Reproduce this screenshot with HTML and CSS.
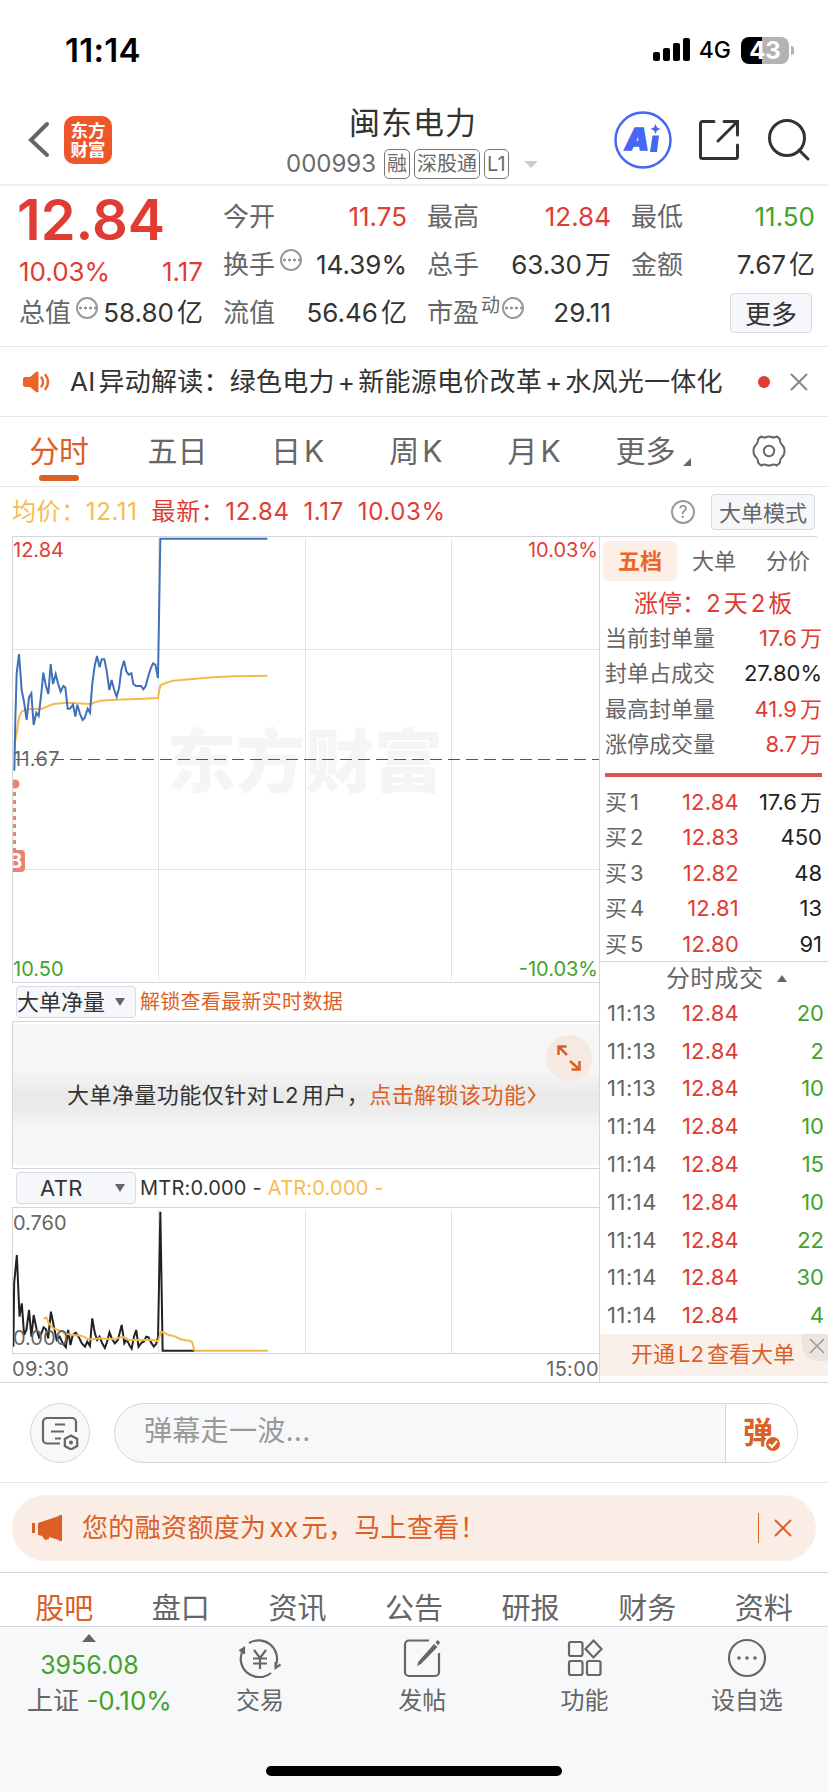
FILE: index.html
```html
<!DOCTYPE html>
<html lang="zh-CN">
<head>
  <meta charset="UTF-8">
  <meta name="viewport" content="width=device-width, initial-scale=1.0">
  <title>闽东电力 000993</title>
  <link rel="stylesheet" href="styles.css">
</head>
<body>
  <div class="status">
    <span class="clock">11:14</span>
    <svg class="signal" width="38" height="24" viewBox="0 0 38 24">
      <rect x="0" y="14" width="7" height="9" rx="2"/>
      <rect x="10" y="10" width="7" height="13" rx="2"/>
      <rect x="20" y="5" width="7" height="18" rx="2"/>
      <rect x="30" y="0" width="7" height="23" rx="2"/>
    </svg>
    <span class="net">4G</span>
    <span class="battery">43</span>
    <span class="battery-cap"></span>
  </div>

  <header class="nav">
    <svg class="back" width="24" height="38" viewBox="0 0 24 38"><path d="M20 3 4 19 20 34"/></svg>
    <div class="logo">东方<br>财富</div>
    <div class="title">
      <h1>闽东电力</h1>
      <div class="code">
        <span class="num">000993</span>
        <span class="tag">融</span>
        <span class="tag">深股通</span>
        <span class="tag">L1</span>
        <span class="caret"></span>
      </div>
    </div>
    <svg class="ai" width="60" height="60" viewBox="0 0 60 60">
      <circle cx="30" cy="30" r="27.5"/>
      <text x="12" y="40">A</text>
      <path d="M39.5 25.5h6.5l-2 16.500h-7zM42.500 14l1.500 3.500 3.500 1.500-3.500 1.500-1.500 3.500-1.500-3.500-3.500-1.500 3.500-1.500z"/>
    </svg>
    <svg class="line-icon" width="44" height="44" viewBox="0 0 44 44"><path d="M17 3.500H5.500a2 2 0 0 0-2 2v33a2 2 0 0 0 2 2h33a2 2 0 0 0 2-2V27M27 3.500h13.500V17M39.500 4.500 21 23"/></svg>
    <svg class="line-icon search" width="44" height="44" viewBox="0 0 44 44"><circle cx="20" cy="20" r="17.500"/><path d="M32 32l9 9"/></svg>
  </header>

  <section class="quote">
    <div class="col main">
      <div class="price">12.84</div>
      <div class="row red"><span>10.03%</span><span>1.17</span></div>
      <div class="row"><label>总值</label><i class="more"></i><b>58.80<u>亿</u></b></div>
    </div>
    <div class="col">
      <div class="row"><label>今开</label><b class="red">11.75</b></div>
      <div class="row"><label>换手</label><i class="more"></i><b>14.39%</b></div>
      <div class="row"><label>流值</label><b>56.46<u>亿</u></b></div>
    </div>
    <div class="col">
      <div class="row"><label>最高</label><b class="red">12.84</b></div>
      <div class="row"><label>总手</label><b>63.30<u>万</u></b></div>
      <div class="row"><label>市盈</label><sup>动</sup><i class="more tight"></i><b>29.11</b></div>
    </div>
    <div class="col">
      <div class="row"><label>最低</label><b class="green">11.50</b></div>
      <div class="row"><label>金额</label><b>7.67<u>亿</u></b></div>
      <div class="row"><button class="btn-more">更多</button></div>
    </div>
  </section>

  <section class="notice">
    <svg width="28" height="24" viewBox="0 0 28 24">
      <path class="fill" d="M3 7h5l6-5c1-.8 2.500-.5 2.500 1v18c0 1.500-1.500 1.800-2.500 1l-6-5H3c-1 0-2-1-2-2V9c0-1 1-2 2-2z"/>
      <path class="stroke" d="M19.500 7.500c2 2.500 2 6.500 0 9M23.500 5c3.300 4 3.300 10 0 14"/>
    </svg>
    <p>AI<u>异动解读：绿色电力</u><u>+</u><u>新能源电价改革</u><u>+</u><u>水风光一体化</u></p>
    <span class="dot"></span>
    <svg class="close" width="18" height="18" viewBox="0 0 18 18"><path d="M1 1l16 16M17 1 1 17"/></svg>
  </section>

  <nav class="periods">
    <span class="active">分时</span>
    <span>五日</span>
    <span>日<u>K</u></span>
    <span>周<u>K</u></span>
    <span>月<u>K</u></span>
    <span class="with-corner">更多<i></i></span>
    <span>
      <svg width="34" height="34" viewBox="0 0 34 34"><path d="M9.500 2.500c2 1.500 4 1 5 .5 1.500-.7 3.500-.7 5 0 1 .5 3 1 5-.5 1.500.8 2.800 1.800 3.500 3-.3 3 .8 4 2 5.200 1.700 1.500 2.500 4 2.500 6.300s-.8 4.800-2.500 6.300c-1.200 1.200-2.300 2.200-2 5.200-.7 1.200-2 2.200-3.500 3-2-1.500-4-1-5-.5-1.500.7-3.500.7-5 0-1-.5-3-1-5 .5-1.500-.8-2.800-1.800-3.500-3 .3-3-.8-4-2-5.200C2.300 21.800 1.500 19.300 1.500 17s.8-4.800 2.500-6.300c1.200-1.200 2.300-2.200 2-5.200.7-1.200 2-2.200 3.500-3z"/><circle cx="17" cy="17" r="5.200"/></svg>
    </span>
  </nav>

  <div class="summary">
    <span class="yellow">均价：12.11</span>
    <span class="red">最新：12.84</span>
    <span class="red">1.17</span>
    <span class="red">10.03%</span>
    <span class="help">?</span>
    <button>大单模式</button>
  </div>

  <main class="board">
    <div class="charts">
      <div class="chart price-chart">
        <svg width="586" height="445" viewBox="0 0 586 445">
          <text class="watermark" x="154" y="250">东方财富</text>
          <path class="grid" d="M145.500 2V443M292.500 2V443M438.500 2V443M0 112.500H586M0 332.500H586"/>
          <path class="base" d="M3 222.500H586"/>
          <g transform="translate(-13 -127) scale(.33333)">
            <polyline class="avg" points="43,1005 50,970 57,922 64,906 75,900 95,896 125,897 140,890 160,882 200,878 272,882 300,872 350,869 430,866 474,864 478,840 482,825 500,818 520,812 570,808 640,802 700,799 802,797"/>
            <polyline class="last" points="43,1082 46,930 50,790 57,732 65,840 72,875 80,930 87,862 94,850 101,945 109,908 116,918 124,850 130,788 137,825 145,852 152,762 159,822 167,792 174,820 182,845 190,828 196,832 203,896 210,896 219,884 226,920 232,884 240,912 248,930 254,924 263,896 270,908 277,820 284,768 291,738 299,772 305,748 313,748 320,782 328,840 335,810 342,838 350,860 357,835 364,780 372,752 379,784 386,794 394,790 400,822 408,828 423,828 430,838 437,828 445,798 452,776 459,760 466,764 474,804 481,386 802,386"/>
          </g>
          <path class="mark" d="M1.500 247V327"/>
          <circle class="spot" cx="2" cy="247" r="4.500"/>
          <rect class="spot" x="-8" y="313" width="20" height="22" rx="4"/>
          <text class="badge" x="-4" y="331">B</text>
        </svg>
        <span class="tl red">12.84</span>
        <span class="tr red">10.03%</span>
        <span class="ml">11.67</span>
        <span class="bl green">10.50</span>
        <span class="br green">-10.03%</span>
      </div>

      <div class="indicator">
        <div class="select">大单净量<i></i></div>
        <span class="orange hint">解锁查看最新实时数据</span>
      </div>

      <div class="locked">
        <p>大单净量功能仅针对<u>L2</u><u>用户，</u><a>点击解锁该功能</a></p>
        <svg class="chev" width="9" height="18" viewBox="0 0 9 18"><path d="M1.500 1 7.500 9l-6 8"/></svg>
        <div class="expand">
          <svg width="24" height="26" viewBox="0 0 24 26"><path d="M9.500 1.500H1.500V10M2 2l8 8M22.500 16v8.500H14.500M22 24l-9-8"/></svg>
        </div>
      </div>

      <div class="indicator">
        <div class="select atr">ATR<i></i></div>
        <span class="legend">MTR:0.000 -</span>
        <span class="legend yellow">ATR:0.000 -</span>
      </div>

      <div class="chart atr-chart">
        <svg width="586" height="145" viewBox="0 0 586 145">
          <path class="grid" d="M145.500 2V145M292.500 2V145M438.500 2V145"/>
          <g transform="translate(-13 -208) scale(.3827 .33333)">
            <polyline class="mtr" points="35,1040 37,850 44,765 51,950 57,910 63,1005 69,990 76,930 82,1010 88,945 96,990 102,1012 108,1000 114,982 120,988 126,1015 133,935 140,975 148,1020 156,1010 164,1030 172,1042 178,990 184,1035 190,1005 198,998 206,1012 214,1030 222,1040 228,1025 235,1038 241,955 248,1000 254,1020 260,1010 267,1030 274,1044 280,1025 286,997 293,1018 300,1030 308,1020 318,975 325,1030 331,1018 338,1035 344,1046 350,1010 356,990 362,1040 370,1028 376,1025 382,1010 388,1012 395,1028 402,1040 408,1032 413,1010 419,635 425,1052 510,1052"/>
            <polyline class="avg" points="114,957 121,952 128,970 140,985 155,992 170,1001 185,1004 200,1006 215,1008 230,1018 245,1018 260,1015 275,1016 300,1018 320,1010 335,1020 350,1019 365,1020 385,1020 400,1020 413,1024 420,996 430,998 440,1005 450,1007 460,1011 470,1017 480,1020 495,1022 502,1026 508,1052 700,1052"/>
          </g>
        </svg>
        <span class="tl">0.760</span>
        <span class="bl">0.000</span>
      </div>
      <div class="times"><span>09:30</span><span>15:00</span></div>
    </div>

    <aside class="depth">
      <div class="depth-tabs"><span class="active">五档</span><span>大单</span><span>分价</span></div>
      <div class="limit">涨停：2<u>天</u><u>2</u><u>板</u></div>
      <div class="stats">
        <div><span>当前封单量</span><b class="red">17.6<u>万</u></b></div>
        <div><span>封单占成交</span><b>27.80%</b></div>
        <div><span>最高封单量</span><b class="red">41.9<u>万</u></b></div>
        <div><span>涨停成交量</span><b class="red">8.7<u>万</u></b></div>
      </div>
      <div class="bar"></div>
      <div class="bids">
        <div><span>买<u>1</u></span><em>12.84</em><b>17.6<u>万</u></b></div>
        <div><span>买<u>2</u></span><em>12.83</em><b>450</b></div>
        <div><span>买<u>3</u></span><em>12.82</em><b>48</b></div>
        <div><span>买<u>4</u></span><em>12.81</em><b>13</b></div>
        <div><span>买<u>5</u></span><em>12.80</em><b>91</b></div>
      </div>
      <div class="trades-title">分时成交<i></i></div>
      <div class="trades">
        <div><span>11:13</span><em>12.84</em><b>20</b></div>
        <div><span>11:13</span><em>12.84</em><b>2</b></div>
        <div><span>11:13</span><em>12.84</em><b>10</b></div>
        <div><span>11:14</span><em>12.84</em><b>10</b></div>
        <div><span>11:14</span><em>12.84</em><b>15</b></div>
        <div><span>11:14</span><em>12.84</em><b>10</b></div>
        <div><span>11:14</span><em>12.84</em><b>22</b></div>
        <div><span>11:14</span><em>12.84</em><b>30</b></div>
        <div><span>11:14</span><em>12.84</em><b>4</b></div>
      </div>
      <div class="promo">开通<u>L2</u><u>查看大单</u>
        <span class="promo-close"><svg width="16" height="16" viewBox="0 0 16 16"><path d="M1 1l14 14M15 1 1 15"/></svg></span>
      </div>
    </aside>
  </main>

  <section class="barrage">
    <div class="round">
      <svg width="38" height="34" viewBox="0 0 38 34">
        <path d="M19 27.500H6a4 4 0 0 1-4-4V6a4 4 0 0 1 4-4h25a4 4 0 0 1 4 4v10M14 8.500h10M10 15.500h13M14 22.500h6"/>
        <path d="M30 19.500l6.200 3.500v7L30 33.500 23.800 30v-7z"/><circle class="fill" cx="30" cy="26.500" r="2"/>
      </svg>
    </div>
    <div class="input">
      <span>弹幕走一波...</span>
      <div class="send">弹
        <svg width="18" height="18" viewBox="0 0 18 18"><circle cx="9" cy="9" r="8"/><path d="M5 9l3 3 5-6"/></svg>
      </div>
    </div>
  </section>

  <section class="banner-wrap">
    <div class="banner">
      <svg width="31" height="28" viewBox="0 0 31 28"><path d="M0 9h3v10H0zM6 9l21-7V1h3v26h-3v-1l-10-3v2l-4 1-3-4-4-1z"/></svg>
      <p>您的融资额度为<u>xx</u><u>元，马上查看！</u></p>
      <span class="sep"></span>
      <svg class="close" width="18" height="18" viewBox="0 0 18 18"><path d="M1 1l16 16M17 1 1 17"/></svg>
    </div>
  </section>

  <nav class="sections">
    <span class="active">股吧</span><span>盘口</span><span>资讯</span><span>公告</span><span>研报</span><span>财务</span><span>资料</span>
  </nav>

  <footer class="toolbar">
    <div class="index">
      <i></i>
      <div class="green">3956.08</div>
      <div>上证 <span class="green">-0.10%</span></div>
    </div>
    <div class="tool">
      <svg width="44" height="40" viewBox="0 0 44 40"><path d="M11 5a18.500 18.500 0 0 1 27 22M33 35A18.500 18.500 0 0 1 5.500 11M1.500 13l4.500-3v6M42.500 26.500l-5 3.500v-6M16 12l6 8 6-8M22 20v11M15 20.500h14M15 25.500h14"/></svg>
      <span>交易</span>
    </div>
    <div class="tool">
      <svg width="40" height="40" viewBox="0 0 40 40"><path d="M27 2.500H7a4 4 0 0 0-4 4V34a4 4 0 0 0 4 4h26a4 4 0 0 0 4-4V15"/><path class="fill" d="M32 6l3.500 3-16.500 17-4 2 1.500-4.500zM33.500 4.500l2-2.500 2.500 2-1.500 3.500z"/></svg>
      <span>发帖</span>
    </div>
    <div class="tool">
      <svg width="38" height="40" viewBox="0 0 38 40"><rect x="3" y="4" width="13.500" height="14" rx="2"/><rect x="3" y="23" width="13.500" height="14" rx="2"/><rect x="21" y="23" width="13.500" height="14" rx="2"/><path d="M27.500 2.500l8 8.500-8 8.500-8-8.500z"/></svg>
      <span>功能</span>
    </div>
    <div class="tool">
      <svg width="40" height="40" viewBox="0 0 40 40"><circle cx="20" cy="20" r="18"/><circle class="fill" cx="12" cy="20" r="1.800"/><circle class="fill" cx="20" cy="20" r="1.800"/><circle class="fill" cx="28" cy="20" r="1.800"/></svg>
      <span>设自选</span>
    </div>
    <div class="home"></div>
  </footer>
</body>
</html>
```
FILE: styles.css
```css
* {
  box-sizing: border-box;
}
body {
  margin: 0;
  width: 828px;
  height: 1792px;
  overflow: hidden;
  background: #fff;
  color: #333;
  font-family: Inter, "Noto Sans CJK SC", sans-serif;
  font-weight: 400;
  line-height: 1;
}
h1, p {
  margin: 0;
  font-weight: 400;
}
b, em, i {
  font-weight: 400;
  font-style: normal;
}
/* gap between latin and chinese runs */
u {
  text-decoration: none;
  margin-left: 3px;
}
svg {
  display: block;
  flex: none;
  fill: none;
}
button {
  font-family: inherit;
  padding: 0 0 4px;
  color: #333;
  background: #f6f7fa;
  border: 1px solid #d9dae3;
  border-radius: 4px;
}
.red { color: #e03c34; }
.green { color: #44a22c; }
.yellow { color: #f5bc50; }
.orange { color: #dc6026; }

/* status bar */
.status {
  height: 100px;
  display: flex;
  align-items: center;
  padding: 0 34px 0 65px;
}
.clock {
  flex: 1;
  font-size: 33px;
  font-weight: 600;
  letter-spacing: .3px;
  color: #000;
}
.signal {
  fill: #000;
}
.net {
  margin-left: 8px;
  font-size: 23px;
  font-weight: 500;
  color: #000;
}
.battery {
  width: 48px;
  height: 27px;
  margin-left: 10px;
  border-radius: 8px;
  background: linear-gradient(90deg, #000 44%, #b3b3b3 44%);
  color: #fff;
  font-size: 24px;
  font-weight: 700;
  line-height: 27px;
  text-align: center;
}
.battery-cap {
  width: 3px;
  height: 9px;
  margin-left: 2px;
  border-radius: 0 4px 4px 0;
  background: #b3b3b3;
}

/* top navigation */
.nav {
  height: 86px;
  border-bottom: 2px solid #eee;
  display: flex;
  align-items: center;
  padding: 0 17px 4px 27px;
}
.back {
  stroke: #666;
  stroke-width: 4;
  stroke-linecap: round;
}
.logo {
  width: 48px;
  height: 48px;
  margin-left: 13px;
  padding-top: 5px;
  border-radius: 10px;
  background: #ee572a;
  color: #fff;
  font-size: 17.500px;
  font-weight: 700;
  line-height: 19px;
  text-align: center;
}
.title {
  width: 260px;
  margin-left: 174px;
}
.title h1 {
  font-size: 31px;
  letter-spacing: 1px;
  line-height: 44px;
  height: 48px;
  padding-left: 63px;
}
.code {
  display: flex;
  align-items: center;
  gap: 4px;
  height: 30px;
  color: #6b6b6b;
}
.code .num {
  font-size: 24px;
  margin-right: 4px;
}
.tag {
  height: 30px;
  padding: 0 2px;
  border: 1px solid #777;
  border-radius: 5px;
  font-size: 20px;
  line-height: 28px;
  white-space: nowrap;
}
.caret {
  margin-left: 11px;
  border: 7px solid transparent;
  border-top-color: #ccc;
  border-bottom: 0;
}
.ai {
  margin-left: 67px;
  fill: #4567f5;
}
.ai circle {
  fill: none;
  stroke: #4567f5;
  stroke-width: 2.500;
}
.ai text {
  font-size: 30px;
  font-weight: 900;
  font-style: italic;
  stroke: #4567f5;
  stroke-width: 1.500;
}
.line-icon {
  margin-left: 24px;
  stroke: #333;
  stroke-width: 3;
  stroke-linecap: round;
}
.search {
  margin-left: 26px;
}

/* quote numbers */
.quote {
  height: 161px;
  border-bottom: 1px solid #e9e9e9;
  display: flex;
  gap: 20px;
  padding: 7px 13px 0 19px;
  font-size: 26px;
}
.col {
  width: 184px;
}
.row {
  height: 48px;
  display: flex;
  align-items: center;
}
.row b, .row.red span:last-child {
  margin-left: auto;
  white-space: nowrap;
}
.main .price {
  height: 58px;
  margin-left: -2px;
  font-size: 56px;
  font-weight: 600;
  line-height: 55px;
  color: #e03c34;
}
.main .row {
  height: 41px;
}
label {
  color: #666;
}
.more {
  flex: none;
  width: 22px;
  height: 22px;
  margin: -10px 0 0 5px;
  border: 2px solid #999;
  border-radius: 50%;
  background: radial-gradient(circle, #999 1.300px, transparent 1.800px) 0 0 / 5px 18px;
}
.more.tight {
  margin-left: 2px;
}
sup {
  font-size: 19px;
  margin: -16px 0 0 2px;
  color: #666;
}
.btn-more {
  width: 82px;
  height: 40px;
  margin-left: auto;
  margin-right: 3px;
  font-size: 26px;
}

/* ai notice */
.notice {
  height: 70px;
  border-bottom: 1px solid #e9e9e9;
  display: flex;
  align-items: center;
  padding: 0 20px 0 22px;
  font-size: 26px;
  letter-spacing: .25px;
}
.notice p {
  width: 665px;
  margin-left: 20px;
  white-space: nowrap;
}
.notice .fill { fill: #ec6528; }
.notice .stroke { stroke: #ec6528; stroke-width: 2.500; stroke-linecap: round; }
.dot {
  width: 12px;
  height: 12px;
  margin-left: 23px;
  border-radius: 50%;
  background: #e03c34;
}
.close {
  margin-left: auto;
  stroke: #888;
  stroke-width: 2;
}

/* period tabs */
.periods {
  height: 70px;
  border-bottom: 1px solid #e9e9e9;
  display: flex;
  font-size: 30px;
  color: #666;
}
.periods span {
  width: 118.280px;
  padding-bottom: 2px;
  display: flex;
  align-items: center;
  justify-content: center;
  position: relative;
}
.periods u {
  margin-right: -4px;
}
.periods .active {
  color: #dc6026;
}
.periods .active::after {
  content: "";
  position: absolute;
  bottom: 5px;
  width: 40px;
  height: 6px;
  border-radius: 3px;
  background: #dc6026;
}
.periods .with-corner {
  padding-left: 6px;
}
.with-corner i {
  align-self: flex-end;
  margin: 0 0 18px 8px;
  border: 4px solid #666;
  border-top-color: transparent;
  border-left-color: transparent;
}
.periods svg {
  stroke: #666;
  stroke-width: 2;
}

/* average / latest */
.summary {
  height: 49px;
  display: flex;
  align-items: center;
  padding: 0 13px 0 12px;
  font-size: 24px;
  letter-spacing: .6px;
}
.summary span + span {
  margin-left: 14px;
}
.summary .help {
  width: 24px;
  height: 24px;
  margin-left: auto;
  border: 2px solid #999;
  border-radius: 50%;
  color: #888;
  font-size: 17px;
  letter-spacing: 0;
  line-height: 20px;
  text-align: center;
}
.summary button {
  width: 104px;
  height: 36px;
  margin-left: 16px;
  font-size: 22px;
  color: #666;
}

/* charts */
.board {
  height: 847px;
  border-bottom: 1px solid #d5d5dc;
  display: flex;
}
.charts {
  width: 587px;
  margin-left: 12px;
}
.chart {
  position: relative;
  border: 1px solid #d5d5dc;
  border-right: 0;
  font-size: 20px;
  color: #666;
}
.chart span {
  position: absolute;
}
.chart .tl { top: 3px; left: 0; }
.chart .tr { top: 3px; right: 1px; }
.chart .bl { bottom: 3px; left: 0; }
.chart .br { bottom: 3px; right: 1px; }
.chart .ml { top: 212px; left: 0; letter-spacing: .3px; }
.price-chart {
  height: 447px;
}
.grid { stroke: #e3e3e9; }
.base { stroke: #555; stroke-dasharray: 12 6; }
.avg, .last, .mtr {
  stroke-width: 2;
  vector-effect: non-scaling-stroke;
}
.avg { stroke: #f5b94a; }
.last { stroke: #4070b8; }
.mtr { stroke: #222; }
.watermark {
  fill: #f5f5f5;
  font-size: 69px;
  font-weight: 900;
}
.mark { stroke: #ee8070; stroke-width: 3; stroke-dasharray: 4 4; }
.spot { fill: #ee8070; }
.badge { fill: #fff; font-size: 20px; font-weight: 700; }

.indicator {
  height: 38px;
  display: flex;
  align-items: center;
  padding-left: 4px;
  font-size: 20px;
  white-space: nowrap;
}
.select {
  width: 120px;
  height: 32px;
  border: 1px solid #d9dae3;
  border-radius: 4px;
  background: #f6f7fa;
  font-size: 22px;
  display: flex;
  align-items: center;
}
.select i {
  margin-left: 10px;
  border: 5px solid transparent;
  border-top: 8px solid #666;
  border-bottom: 0;
}
.select.atr {
  padding-left: 23px;
  letter-spacing: .4px;
}
.select.atr i {
  margin-left: auto;
  margin-right: 10px;
}
.hint {
  margin-left: 4px;
  letter-spacing: .3px;
}
.legend {
  margin-left: 4px;
  letter-spacing: .2px;
}
.legend + .legend {
  margin-left: 6px;
}
.locked {
  position: relative;
  height: 148px;
  border: 1px solid #d5d5dc;
  border-right: 0;
  padding-left: 54px;
  display: flex;
  align-items: center;
  font-size: 22px;
  letter-spacing: .45px;
  background: linear-gradient(180deg, #fff 2px, #f7f7f7 2px, #f6f6f6 32%, #e9e9e9 50%, #ebebeb 58%, #f6f6f6 74%, #f7f7f7 143px, #fff 143px);
  white-space: nowrap;
}
.locked a {
  color: #dc6026;
}
.chev {
  stroke: #dc6026;
  stroke-width: 2;
  margin-left: 1px;
}
.expand {
  position: absolute;
  top: 13px;
  right: 7px;
  width: 46px;
  height: 46px;
  border-radius: 50%;
  background: #f5e9e2;
  display: flex;
  align-items: center;
  justify-content: center;
}
.expand svg {
  stroke: #dc6026;
  stroke-width: 2.500;
}
.atr-chart {
  height: 147px;
}
.atr-chart .tl {
  top: 5px;
}
.atr-chart .bl {
  bottom: 5px;
}
.times {
  height: 29px;
  display: flex;
  align-items: center;
  justify-content: space-between;
  font-size: 20px;
  letter-spacing: .3px;
  color: #666;
}

/* order depth */
.depth {
  flex: 1;
  border-left: 1px solid #d5d5dc;
  color: #666;
  font-size: 22px;
}
.depth b {
  color: #222;
}
.depth b.red {
  color: #e03c34;
}
.depth-tabs {
  width: 217px;
  height: 46px;
  border-top: 1px solid #d5d5dc;
  padding: 4px 0 0 3px;
  display: flex;
}
.depth-tabs span {
  width: 74px;
  height: 40px;
  line-height: 40px;
  border-radius: 6px;
  text-align: center;
  flex: none;
}
.depth-tabs .active {
  background: #fdeee6;
  color: #ec6528;
  font-weight: 700;
}
.limit {
  height: 38px;
  line-height: 43px;
  padding-left: 34px;
  color: #e03c34;
  font-size: 24px;
}
.stats {
  padding: 0 6px 0 5px;
}
.stats div, .bids div, .trades div {
  height: 35.500px;
  display: flex;
  align-items: center;
  justify-content: space-between;
}
.bar {
  height: 4px;
  margin: 11px 6px 0 5px;
  background: #db5650;
}
.bids {
  height: 185px;
  padding: 7px 6px 0 5px;
  border-bottom: 1px solid #d5d5dc;
}
.bids em, .trades em {
  flex: 1;
  padding-right: 83px;
  text-align: right;
  color: #e03c34;
  letter-spacing: .2px;
}
.bids span, .bids b, .trades span, .trades b {
  width: 50px;
  white-space: nowrap;
}
.bids b, .trades b {
  width: 0;
  display: flex;
  justify-content: flex-end;
}
.trades-title {
  height: 32px;
  display: flex;
  align-items: center;
  padding: 1px 0 0 66px;
  font-size: 24px;
  letter-spacing: .3px;
}
.trades-title i {
  margin-left: 14px;
  border: 5px solid transparent;
  border-bottom: 7px solid #666;
  border-top: 0;
}
.trades {
  padding: 0 4px 0 7px;
}
.trades div {
  height: 37.800px;
}
.trades span {
  letter-spacing: .5px;
}
.trades em {
  padding-right: 85px;
}
.depth .trades b {
  color: #44a22c;
}
.promo {
  position: relative;
  height: 42px;
  line-height: 40px;
  padding-left: 31px;
  background: #faf0ea;
  color: #dc6026;
}
.promo-close {
  position: absolute;
  top: 0;
  right: 0;
  width: 26px;
  height: 27px;
  padding: 4px 0 0 7px;
  border-bottom-left-radius: 16px;
  background: #ebe4df;
}
.promo-close svg {
  stroke: #999;
  stroke-width: 1.500;
}

/* barrage input */
.barrage {
  height: 100px;
  border-bottom: 1px solid #e9e9e9;
  display: flex;
  align-items: center;
  gap: 24px;
  padding: 0 30px;
}
.round {
  width: 60px;
  height: 60px;
  border: 1px solid #d5d5dc;
  border-radius: 50%;
  background: #f7f8fa;
  display: flex;
  align-items: center;
  justify-content: center;
}
.round svg {
  stroke: #666;
  stroke-width: 2.200;
}
.round .fill { fill: #666; stroke: none; }
.input {
  flex: 1;
  height: 60px;
  border: 1px solid #d5d5dc;
  border-radius: 30px;
  background: #f7f8fa;
  overflow: hidden;
  display: flex;
  align-items: center;
  padding-left: 29px;
  font-size: 28px;
  letter-spacing: .3px;
  color: #999;
}
.input > span {
  padding-bottom: 3px;
}
.send {
  position: relative;
  width: 72px;
  height: 60px;
  margin-left: auto;
  padding-left: 17px;
  border-left: 1px solid #d5d5dc;
  background: #fff;
  color: #dc6026;
  font-weight: 700;
  font-size: 30px;
  line-height: 58px;
}
.send svg {
  position: absolute;
  left: 38px;
  top: 32px;
  fill: #dc6026;
  stroke: #fff;
  stroke-width: 2;
}
.send path { fill: none; }

/* margin banner */
.banner-wrap {
  height: 90px;
  border-bottom: 1px solid #d5d5dc;
  padding: 12px 12px 0;
}
.banner {
  height: 66px;
  border-radius: 33px;
  background: #faede5;
  color: #dc6026;
  display: flex;
  align-items: center;
  padding: 0 24px 0 20px;
  font-size: 26px;
  letter-spacing: .35px;
}
.banner svg:first-child { fill: #dc6026; }
.banner p {
  flex: 1;
  margin-left: 19px;
}
.sep {
  width: 1px;
  height: 30px;
  background: #dc6026;
}
.banner .close {
  margin-left: 15px;
  stroke: #dc6026;
}

/* section tabs */
.sections {
  height: 54px;
  border-bottom: 1px solid #d5d5dc;
  display: flex;
  padding: 0 6px;
  font-size: 29px;
  line-height: 71px;
  color: #666;
}
.sections span {
  flex: 1;
  text-align: center;
}
.sections .active {
  color: #dc6026;
}

/* bottom bar */
.toolbar {
  position: relative;
  height: 165px;
  background: #f7f8fa;
  display: flex;
  font-size: 24px;
  color: #666;
}
.index {
  width: 179px;
  display: flex;
  flex-direction: column;
  align-items: center;
  white-space: nowrap;
}
.index i {
  margin-top: 7px;
  border: 7px solid transparent;
  border-bottom: 8px solid #666;
  border-top: 0;
}
.index div {
  height: 36px;
  line-height: 46px;
  margin-left: 20px;
  font-size: 26px;
}
.index div.green {
  margin-left: 0;
  font-size: 25px;
}
.tool {
  width: 162.300px;
  padding-top: 11px;
  display: flex;
  flex-direction: column;
  align-items: center;
}
.tool svg {
  stroke: #666;
  stroke-width: 2.200;
}
.tool .fill { fill: #666; stroke: none; }
.tool span {
  margin-top: 11px;
}
.home {
  position: absolute;
  left: 266px;
  bottom: 16px;
  width: 296px;
  height: 10px;
  border-radius: 5px;
  background: #000;
}
```
